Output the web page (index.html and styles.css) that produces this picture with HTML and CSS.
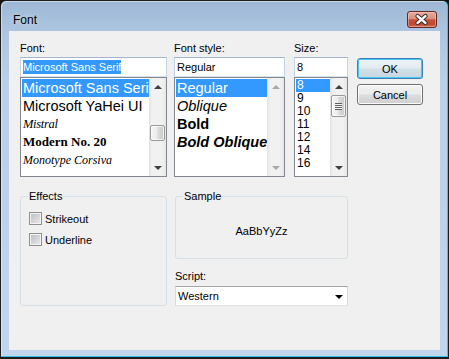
FILE: index.html
```html
<!DOCTYPE html>
<html lang="en">
<head>
    <meta charset="UTF-8">
    <meta name="viewport" content="width=device-width, initial-scale=1.0">
    <title>Font</title>
    <link rel="stylesheet" href="styles.css">
</head>
<body>
    <div class="window">
        <div class="titlebar">
            <span class="title">Font</span>
            <div class="close-btn">
                <svg width="30" height="17" viewBox="0 0 30 17">
                    <path d="M11 5 L19 12 M19 5 L11 12" stroke="#3a2a28" stroke-width="4.6" stroke-linecap="round" fill="none"/>
                    <path d="M11 5 L19 12 M19 5 L11 12" stroke="#ffffff" stroke-width="2.6" stroke-linecap="round" fill="none"/>
                </svg>
            </div>
        </div>

        <div class="client">
            <div class="top-row">
                <!-- Font family -->
                <div class="col col-font">
                    <label class="field-label">Font:</label>
                    <div class="textbox"><span class="selected-text">Microsoft Sans Serif</span></div>
                    <div class="listbox">
                        <ul class="items">
                            <li class="item selected">Microsoft Sans Serif</li>
                            <li class="item">Microsoft YaHei UI</li>
                            <li class="item item-mistral">Mistral</li>
                            <li class="item item-modern">Modern No. 20</li>
                            <li class="item item-corsiva">Monotype Corsiva</li>
                        </ul>
                        <div class="scrollbar">
                            <div class="sb-btn"><span class="arrow arrow-up"></span></div>
                            <div class="sb-track"><div class="thumb thumb-font"></div></div>
                            <div class="sb-btn"><span class="arrow arrow-down"></span></div>
                        </div>
                    </div>
                </div>

                <!-- Font style -->
                <div class="col col-style">
                    <label class="field-label">Font style:</label>
                    <div class="textbox">Regular</div>
                    <div class="listbox">
                        <ul class="items">
                            <li class="item selected">Regular</li>
                            <li class="item item-oblique">Oblique</li>
                            <li class="item item-bold">Bold</li>
                            <li class="item item-bold-oblique">Bold Oblique</li>
                        </ul>
                        <div class="scrollbar">
                            <div class="sb-btn"><span class="arrow arrow-up disabled"></span></div>
                            <div class="sb-track"></div>
                            <div class="sb-btn"><span class="arrow arrow-down disabled"></span></div>
                        </div>
                    </div>
                </div>

                <!-- Size -->
                <div class="col col-size">
                    <label class="field-label">Size:</label>
                    <div class="textbox">8</div>
                    <div class="listbox">
                        <ul class="items size-items">
                            <li class="item selected">8</li>
                            <li class="item">9</li>
                            <li class="item">10</li>
                            <li class="item">11</li>
                            <li class="item">12</li>
                            <li class="item">14</li>
                            <li class="item">16</li>
                        </ul>
                        <div class="scrollbar">
                            <div class="sb-btn"><span class="arrow arrow-up"></span></div>
                            <div class="sb-track"><div class="thumb thumb-size"><span class="grip"></span></div></div>
                            <div class="sb-btn"><span class="arrow arrow-down"></span></div>
                        </div>
                    </div>
                </div>

                <div class="buttons">
                    <button type="button" class="btn btn-default">OK</button>
                    <button type="button" class="btn">Cancel</button>
                </div>
            </div>

            <div class="bottom-row">
                <fieldset class="group effects">
                    <legend>Effects</legend>
                    <div class="check-row"><span class="checkbox"></span>Strikeout</div>
                    <div class="check-row"><span class="checkbox"></span>Underline</div>
                </fieldset>

                <div class="right-col">
                    <fieldset class="group sample">
                        <legend>Sample</legend>
                        <div class="sample-text">AaBbYyZz</div>
                    </fieldset>
                    <label class="field-label script-label">Script:</label>
                    <div class="combo">
                        <span>Western</span>
                        <span class="combo-arrow"></span>
                    </div>
                </div>
            </div>
        </div>
    </div>
</body>
</html>
```

FILE: styles.css
```css
* {
    box-sizing: border-box;
    margin: 0;
    padding: 0;
}

body {
    width: 449px;
    height: 359px;
    overflow: hidden;
    background-color: #101010;
    font-family: "Liberation Sans", Arial, sans-serif;
    font-size: 11px;
    color: #000;
}

.window {
    width: 449px;
    height: 359px;
    display: flex;
    flex-direction: column;
    padding: 0 8px 7px 8px;
    border: 1px solid #1c1c1c;
    border-bottom-width: 2px;
    border-radius: 6px 6px 0 0;
    background: linear-gradient(#9cb7d5, #adc5e0 30px, #bad0e8 80px, #c1d5ec);
    box-shadow: inset 0 -1px 0 #39c4e6, inset -1px 0 0 #39c4e6, inset 1px 1px 0 rgba(255, 255, 255, 0.45);
}

/* Title bar */
.titlebar {
    height: 30px;
    display: flex;
    justify-content: space-between;
    align-items: flex-start;
}

.title {
    margin: 12px 0 0 4px;
    font-size: 12px;
    line-height: 14px;
    text-shadow: 0 0 6px rgba(255, 255, 255, 0.7);
}

.close-btn {
    width: 30px;
    height: 17px;
    margin: 10px 3px 0 0;
    border: 1px solid #5e2a23;
    border-radius: 3px;
    background: linear-gradient(#e6ad9f 0%, #d98f7d 45%, #c6513a 52%, #c14630 80%, #d06a53 100%);
    box-shadow: inset 0 0 0 1px rgba(255, 210, 200, 0.45);
    display: flex;
    align-items: center;
    justify-content: center;
}

.close-btn svg {
    display: block;
    margin: -1px 0 0 -1px;
}

/* Client area */
.client {
    flex: 1;
    background-color: #f0f0f0;
}

.top-row {
    display: flex;
    padding: 11px 0 0 11px;
}

.col {
    display: flex;
    flex-direction: column;
}

.col-font {
    width: 147px;
}

.col-style {
    width: 111px;
    margin-left: 7px;
}

.col-size {
    width: 54px;
    margin-left: 9px;
}

.field-label {
    display: block;
    height: 13px;
    line-height: 13px;
    margin-bottom: 2px;
}

.textbox {
    height: 20px;
    display: flex;
    align-items: center;
    padding: 0 2px;
    background-color: #fff;
    border: 1px solid;
    border-color: #a3b6cb #c3d3e3 #d6e2ee #c3d3e3;
    white-space: nowrap;
    overflow: hidden;
}

.selected-text {
    line-height: 14px;
    background-color: #3399ff;
    color: #fff;
}

.listbox {
    height: 100px;
    display: flex;
    background-color: #fff;
    border: 1px solid #828790;
}

.items {
    flex: 1;
    min-width: 0;
    list-style: none;
    padding: 1px 0 0 1px;
    overflow: hidden;
}

.item {
    height: 18px;
    line-height: 18px;
    padding-left: 1px;
    font-size: 14.5px;
    white-space: nowrap;
    overflow: hidden;
}

.item.selected {
    background-color: #3399ff;
    color: #fff;
}

.item-mistral {
    font-family: "Liberation Serif", serif;
    font-style: italic;
    font-size: 12.5px;
    letter-spacing: -0.3px;
}

.item-modern {
    font-family: "Liberation Serif", serif;
    font-weight: bold;
    font-size: 13px;
}

.item-corsiva {
    font-family: "Liberation Serif", serif;
    font-style: italic;
    font-size: 12px;
}

.item-oblique {
    font-style: italic;
}

.item-bold {
    font-weight: bold;
}

.item-bold-oblique {
    font-weight: bold;
    font-style: italic;
}

.size-items .item {
    height: 13px;
    line-height: 13px;
    font-size: 12px;
}

/* Scrollbars */
.scrollbar {
    width: 17px;
    display: flex;
    flex-direction: column;
    background: linear-gradient(90deg, #e2e2e2, #f1f1f1 3px, #f1f1f1 13px, #e6e6e6);
}

.sb-btn {
    height: 17px;
    display: flex;
    align-items: center;
    justify-content: center;
}

.sb-track {
    flex: 1;
    padding: 0 1px;
}

.arrow {
    width: 0;
    height: 0;
    border-left: 4px solid transparent;
    border-right: 4px solid transparent;
}

.arrow-up {
    border-bottom: 4px solid #3f3f3f;
}

.arrow-down {
    border-top: 4px solid #3f3f3f;
}

.arrow-up.disabled {
    border-bottom-color: #a9a9a9;
}

.arrow-down.disabled {
    border-top-color: #a9a9a9;
}

.thumb {
    border: 1px solid #999;
    border-radius: 2px;
    background: linear-gradient(90deg, #f4f4f4, #ebebeb 45%, #d9d9d9 55%, #cbcbcb);
    box-shadow: inset 0 0 0 1px rgba(255, 255, 255, 0.7);
    display: flex;
    align-items: center;
    justify-content: center;
}

.thumb-font {
    height: 16px;
    margin-top: 30px;
}

.thumb-size {
    height: 22px;
}

.grip {
    width: 7px;
    height: 7px;
    background: repeating-linear-gradient(#5f5f5f 0, #5f5f5f 1px, #f6f6f6 1px, #f6f6f6 2px);
}

/* Buttons */
.buttons {
    width: 66px;
    margin: 16px 0 0 9px;
    display: flex;
    flex-direction: column;
    gap: 5px;
}

.btn {
    height: 21px;
    border: 1px solid #707070;
    border-radius: 3px;
    background: linear-gradient(#f2f2f2 0%, #ebebeb 48%, #dddddd 52%, #cfcfcf 100%);
    box-shadow: inset 0 0 0 1px #fcfcfc;
    font-family: "Liberation Sans", Arial, sans-serif;
    font-size: 11px;
    color: #000;
}

.btn-default {
    border-color: #3c7fb1;
    background: linear-gradient(#eef4f7 0%, #e3ecf1 48%, #d3e0e8 52%, #c6d6e0 100%);
    box-shadow: inset 0 0 0 1px #48c8f5;
}

/* Bottom part */
.bottom-row {
    display: flex;
    padding-left: 11px;
    margin-top: 13px;
}

.group {
    border: 1px solid #d5dfe5;
    border-radius: 3px;
    padding: 0 7px;
}

.group legend {
    padding: 0 1px;
    line-height: 13px;
}

.effects {
    width: 147px;
    height: 116px;
    padding-top: 9px;
}

.check-row {
    height: 13px;
    display: flex;
    align-items: center;
    margin: 0 0 8px 1px;
}

.checkbox {
    width: 13px;
    height: 13px;
    margin-right: 3px;
    border: 1px solid #8e8f8f;
    background: linear-gradient(135deg, #b9bdc2, #ebebec);
    box-shadow: inset 0 0 0 1px #f4f4f4;
}

.right-col {
    width: 173px;
    margin-left: 8px;
}

.sample {
    height: 69px;
    display: flex;
    justify-content: center;
}

.sample-text {
    margin-top: 22px;
    line-height: 13px;
}

.script-label {
    margin-top: 11px;
    margin-bottom: 3px;
}

.combo {
    height: 20px;
    display: flex;
    align-items: center;
    justify-content: space-between;
    padding: 0 4px 0 2px;
    background-color: #fff;
    border: 1px solid;
    border-color: #a5a5a5 #d9d9d9 #e3e3e3 #d9d9d9;
}

.combo-arrow {
    width: 0;
    height: 0;
    border-left: 4px solid transparent;
    border-right: 4px solid transparent;
    border-top: 4px solid #000;
    margin-top: 1px;
}
```
